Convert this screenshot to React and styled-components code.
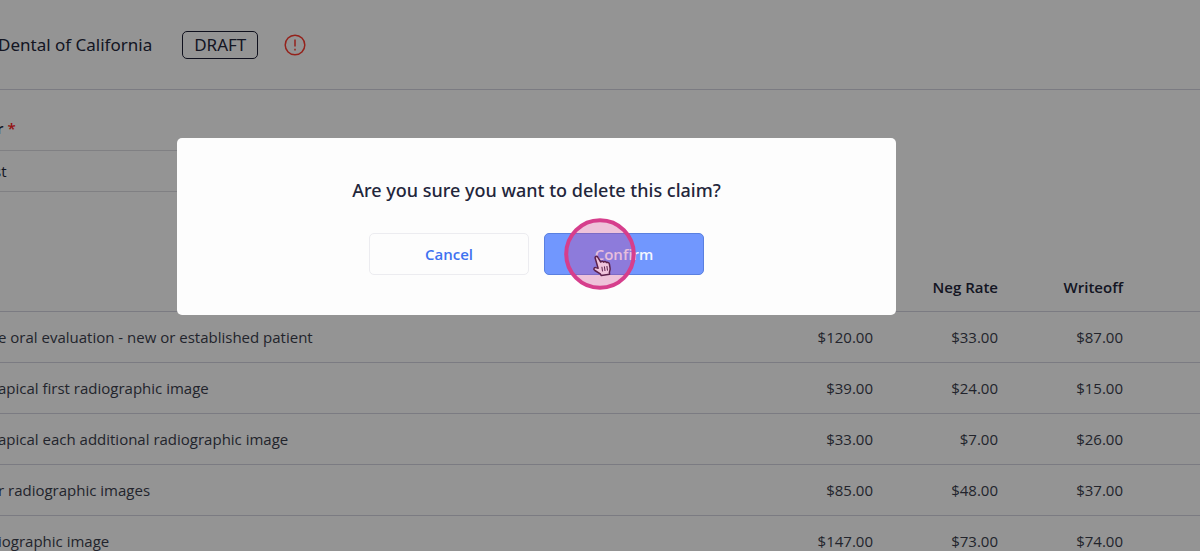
import React from 'react';
import styled, { createGlobalStyle } from 'styled-components';

const headingFont = "'Noto Sans', 'Open Sans', sans-serif";

const GlobalStyle = createGlobalStyle`
  *, *::before, *::after { box-sizing: border-box; }
  body {
    margin: 0;
    background: #ffffff;
    color: #23263b;
    font-family: 'Open Sans', sans-serif;
    font-size: 15px;
    line-height: 20px;
  }
`;

const Page = styled.div`
  position: relative;
  height: 100vh;
  overflow: hidden;
`;

const ClaimHeader = styled.header`
  display: flex;
  align-items: center;
  height: 90px;
  border-bottom: 1px solid #d4d4e0;
  font-family: ${headingFont};
  font-size: 17px;
`;

const Carrier = styled.h1`
  margin: 0 30px 0 -2px;
  font-size: inherit;
  font-weight: 400;
`;

const StatusBadge = styled.span`
  padding: 3px 11px;
  margin-right: 26px;
  border: 1px solid #1b1d33;
  border-radius: 5px;
`;

const AlertIcon = styled.svg`
  display: block;
  width: 22px;
  height: 22px;
`;

const Field = styled.div`
  display: flex;
  flex-direction: column;
  width: 480px;
  margin: 28px 0 68px;
`;

const FieldLabel = styled.label`
  margin: 0 0 12px -3px;
  font-weight: 600;
`;

const Required = styled.span`
  color: #ff2020;
`;

const FieldInput = styled.input`
  height: 42px;
  margin: 0;
  padding: 0;
  border: solid #dcdce2;
  border-width: 1px 0;
  background: transparent;
  color: inherit;
  font: inherit;
  text-indent: -6px;
`;

const ProcedureTable = styled.table`
  width: 100%;
  border-collapse: collapse;
  table-layout: fixed;
`;

const Row = styled.tr`
  height: 51px;
  border-bottom: 1px solid #d4d4e0;
`;

const HeadCell = styled.th`
  width: ${({ $width }) => $width || 'auto'};
  padding: 3px 0 0;
  font-weight: 600;
  text-align: right;
`;

const Description = styled.td`
  padding: 0;
  color: #3b3e4d;
  white-space: nowrap;
`;

const DescriptionText = styled.span`
  margin-left: -2px;
`;

const Amount = styled.td`
  padding: 0;
  color: #3b3e4d;
  text-align: right;
`;

const Overlay = styled.div`
  position: absolute;
  inset: 0;
  display: flex;
  align-items: flex-start;
  justify-content: center;
  padding: 138px 127px 0 0;
  background: rgba(0, 0, 0, 0.42);
`;

const Dialog = styled.div`
  flex: 0 1 719px;
  padding: 40px 24px;
  border-radius: 5px;
  background: #fdfdfd;
  text-align: center;
`;

const Question = styled.h2`
  margin: 0 0 31px;
  font-family: ${headingFont};
  font-size: 18px;
  font-weight: 500;
  line-height: 24px;
`;

const Actions = styled.div`
  display: flex;
  justify-content: center;
  gap: 15px;
`;

const ActionSlot = styled.div`
  position: relative;
`;

const ActionButton = styled.button`
  display: block;
  width: 160px;
  height: 42px;
  padding: 0;
  border: 1px solid ${({ $primary }) => ($primary ? '#5a80e0' : '#ececf0')};
  border-radius: 5px;
  background: ${({ $primary }) => ($primary ? '#7197fe' : '#fdfdfd')};
  color: ${({ $primary }) => ($primary ? '#f4f6ff' : '#3f72f0')};
  font: inherit;
  font-weight: 600;
`;

const Pointer = styled.svg`
  position: absolute;
  top: -15px;
  left: 20px;
  width: 72px;
  height: 72px;
  pointer-events: none;
`;

const procedures = [
  ['e oral evaluation - new or established patient', '$120.00', '$33.00', '$87.00'],
  ['apical first radiographic image', '$39.00', '$24.00', '$15.00'],
  ['apical each additional radiographic image', '$33.00', '$7.00', '$26.00'],
  ['r radiographic images', '$85.00', '$48.00', '$37.00'],
  ['iographic image', '$147.00', '$73.00', '$74.00'],
];

export default function App() {
  return (
    <>
      <GlobalStyle />
      <Page>
        <ClaimHeader>
          <Carrier>Dental of California</Carrier>
          <StatusBadge>DRAFT</StatusBadge>
          <AlertIcon viewBox="0 0 22 22" fill="none" stroke="#ff3b30" strokeWidth="1.5" aria-hidden="true">
            <circle cx="11" cy="11" r="9.8" />
            <path d="M11 5.5v7" />
            <path d="M11 14.7v1.8" />
          </AlertIcon>
        </ClaimHeader>
        <Field>
          <FieldLabel htmlFor="provider">r <Required>*</Required></FieldLabel>
          <FieldInput id="provider" defaultValue="st" />
        </Field>
        <ProcedureTable>
          <thead>
            <Row>
              <HeadCell />
              <HeadCell $width="125px" />
              <HeadCell $width="125px" scope="col">Neg Rate</HeadCell>
              <HeadCell $width="125px" scope="col">Writeoff</HeadCell>
              <HeadCell $width="77px" />
            </Row>
          </thead>
          <tbody>
            {procedures.map(([name, ...amounts]) => (
              <Row key={name}>
                <Description><DescriptionText>{name}</DescriptionText></Description>
                {amounts.map((amount, i) => <Amount key={i}>{amount}</Amount>)}
                <td />
              </Row>
            ))}
          </tbody>
        </ProcedureTable>
        <Overlay>
          <Dialog role="dialog" aria-modal="true" aria-labelledby="question">
            <Question id="question">Are you sure you want to delete this claim?</Question>
            <Actions>
              <ActionButton type="button">Cancel</ActionButton>
              <ActionSlot>
                <ActionButton type="button" $primary>Confirm</ActionButton>
                <Pointer viewBox="0 0 72 72" aria-hidden="true">
                  <path
                    d="M31.300 40.500c-.9-1.800 1.600-3 2.600-1.200l2.800 4.700c.7-1.100 2.300-1 2.900.1.900-.9 2.400-.6 2.800.5 1.300-.6 2.800.1 3 1.500l.7 4.300c.2 1.700-.5 2.700-.7 4l.2 1.900-8.300 1.300-1-1.800-5.400-3.300c-2.100-1.400-.6-3.600 1.200-2.900l2 .7z"
                    fill="#fff" stroke="#2c1630" strokeWidth="1.500" strokeLinejoin="round"
                  />
                  <path d="M37.900 48.800l.6 4.600M40.400 48.400l.6 4.600M42.900 48l.6 4.600" stroke="#2c1630" strokeWidth="1" />
                  <circle cx="36" cy="36" r="33.800" fill="#cd3a8a" fillOpacity=".3" stroke="#d63e8c" strokeWidth="4" />
                </Pointer>
              </ActionSlot>
            </Actions>
          </Dialog>
        </Overlay>
      </Page>
    </>
  );
}
